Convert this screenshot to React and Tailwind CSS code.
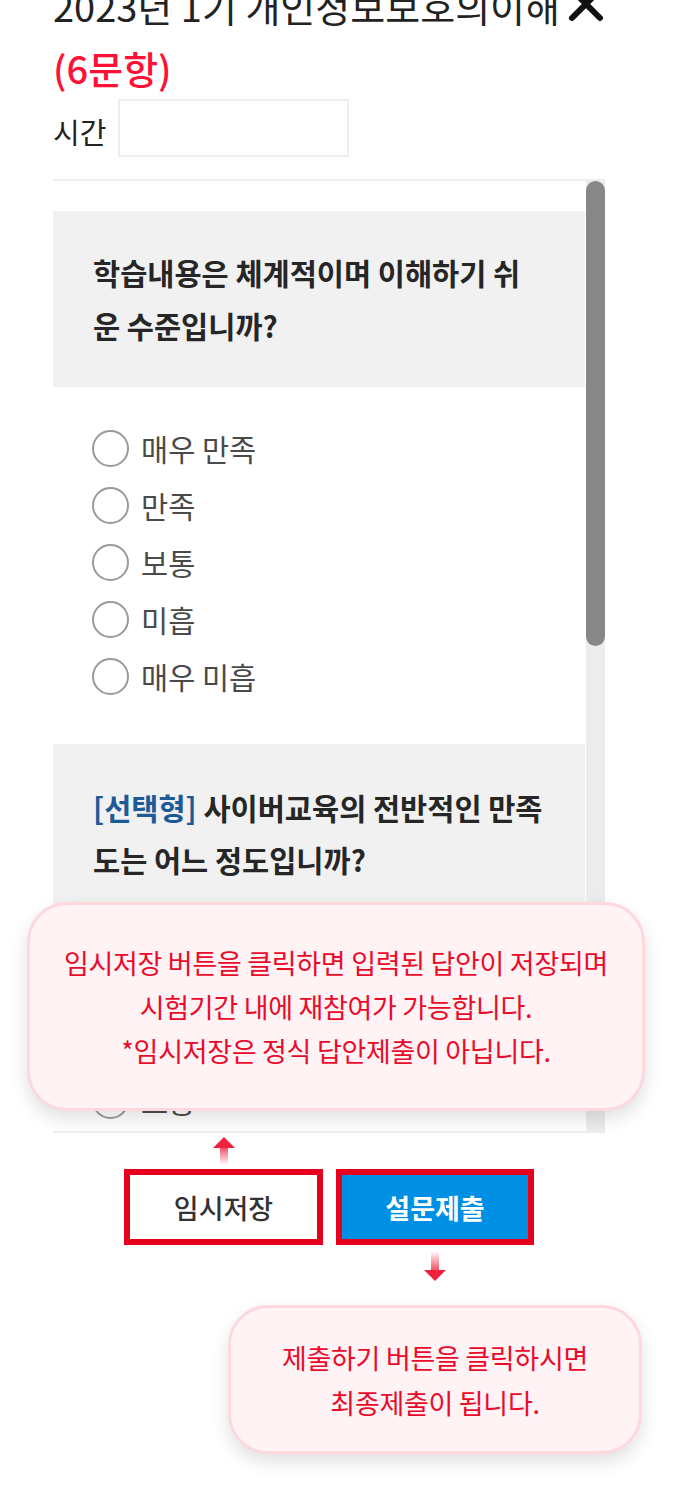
import React from "react";

function Radio({ label }) {
  return (
    <div className="flex items-center h-[57px] gap-[12px]">
      <span className="w-[37px] h-[37px] rounded-full border-[2.5px] border-[#9a9a9a] bg-white shrink-0" />
      <span className="text-[29.5px] text-[#4a4a4a] leading-none whitespace-nowrap">{label}</span>
    </div>
  );
}

const OPTIONS = ["매우 만족", "만족", "보통", "미흡", "매우 미흡"];

function UpArrow() {
  return (
    <svg width="22" height="28" viewBox="0 0 22 28">
      <defs>
        <linearGradient id="ua" x1="0" y1="0" x2="0" y2="1">
          <stop offset="0" stopColor="#f2344d" stopOpacity="0.85" />
          <stop offset="1" stopColor="#f2344d" stopOpacity="0" />
        </linearGradient>
      </defs>
      <polygon points="0,11 11,0 22,11" fill="#f0223e" />
      <rect x="7" y="11" width="8" height="17" fill="url(#ua)" />
    </svg>
  );
}

function DownArrow() {
  return (
    <svg width="22" height="30" viewBox="0 0 22 30">
      <defs>
        <linearGradient id="da" x1="0" y1="1" x2="0" y2="0">
          <stop offset="0" stopColor="#f2344d" stopOpacity="0.85" />
          <stop offset="1" stopColor="#f2344d" stopOpacity="0" />
        </linearGradient>
      </defs>
      <rect x="7" y="0" width="8" height="19" fill="url(#da)" />
      <polygon points="0,19 11,30 22,19" fill="#f0223e" />
    </svg>
  );
}

export default function App() {
  return (
    <div className="w-[680px] h-[1492px] overflow-hidden bg-white pl-[53px] font-['Noto_Sans_CJK_KR','Noto_Sans',sans-serif]">
      <div className="w-[552px]">
        {/* Title */}
        <div className="flex items-center justify-between mt-[-25px] h-[62px]">
          <h1 className="text-[38px] leading-[62px] text-[#222] font-normal whitespace-nowrap">
            2023년 1기 개인정보보호의이해
          </h1>
          <svg width="38" height="38" viewBox="0 0 38 38" className="mt-[-4px] shrink-0">
            <path d="M5 5 L33 33 M33 5 L5 33" stroke="#111" strokeWidth="6" strokeLinecap="round" />
          </svg>
        </div>
        <div className="text-[38px] leading-[62px] text-[#ff1035] font-medium">(6문항)</div>

        {/* Time */}
        <div className="flex items-center gap-[12px] h-[58px]">
          <span className="text-[29px] text-[#222] leading-none mt-[6px]">시간</span>
          <div className="w-[231px] h-[58px] border-2 border-[#eeeeee] bg-white" />
        </div>

        {/* Scroll area */}
        <div className="relative mt-[22px]">
          <div className="flex h-[954px] border-t-2 border-b-2 border-[#eeeeee] overflow-hidden">
            <div className="flex-1 pt-[30px] pr-[1px] min-w-0">
              <div className="bg-[#f1f1f1] pl-[40px] py-[35px] text-[29.5px] leading-[53px] font-semibold text-[#262626] whitespace-nowrap">
                <div>학습내용은 체계적이며 이해하기 쉬</div>
                <div>운 수준입니까?</div>
              </div>
              <div className="pl-[39px] pt-[33px] pb-[39px]">
                {OPTIONS.map((o) => (
                  <Radio key={o} label={o} />
                ))}
              </div>
              <div className="bg-[#f1f1f1] pl-[40px] py-[37px] text-[29.5px] leading-[52px] font-semibold text-[#262626] whitespace-nowrap">
                <div>
                  <span className="text-[#1d5a98]">[선택형]</span> 사이버교육의 전반적인 만족
                </div>
                <div>도는 어느 정도입니까?</div>
              </div>
              <div className="pl-[39px] pt-[36px] pb-[39px]">
                {OPTIONS.map((o) => (
                  <Radio key={"b" + o} label={o} />
                ))}
              </div>
            </div>
            <div className="w-[19px] bg-[#ececec] shrink-0">
              <div className="h-[465px] bg-[#878787] rounded-full" />
            </div>
          </div>

          {/* Bubble 1 */}
          <div className="absolute left-[-26px] top-[723px] w-[618px] h-[209px] rounded-[40px] border-[3px] border-[#ffd8de] bg-[#fff3f5] shadow-[0_8px_18px_rgba(0,0,0,0.12)] flex flex-col items-center justify-center text-[#ea0a2a] text-[27px] leading-[44px] tracking-[-0.3px] whitespace-nowrap">
            <div>임시저장 버튼을 클릭하면 입력된 답안이 저장되며</div>
            <div>시험기간 내에 재참여가 가능합니다.</div>
            <div>*임시저장은 정식 답안제출이 아닙니다.</div>
          </div>
        </div>

        {/* Arrow up */}
        <div className="flex justify-center gap-[13px] mt-[4px] h-[32px]">
          <div className="w-[199px] flex justify-center">
            <UpArrow />
          </div>
          <div className="w-[198px]" />
        </div>

        {/* Buttons */}
        <div className="flex justify-center gap-[13px]">
          <button className="w-[199px] h-[76px] border-[6px] border-[#e6001e] bg-white text-[27px] leading-none text-[#333] font-medium">
            임시저장
          </button>
          <button className="w-[198px] h-[76px] border-[6px] border-[#e6001e] bg-[#0090e3] text-[27px] leading-none text-white font-bold">
            설문제출
          </button>
        </div>

        {/* Arrow down */}
        <div className="flex justify-center gap-[13px] mt-[6px] h-[30px]">
          <div className="w-[199px]" />
          <div className="w-[198px] flex justify-center">
            <DownArrow />
          </div>
        </div>

        {/* Bubble 2 */}
        <div className="ml-[175px] mt-[24px] w-[414px] h-[149px] rounded-[40px] border-[3px] border-[#ffd8de] bg-[#fff3f5] shadow-[0_8px_18px_rgba(0,0,0,0.12)] flex flex-col items-center justify-center text-[#ea0a2a] text-[27px] leading-[45px] tracking-[-0.3px] whitespace-nowrap">
          <div>제출하기 버튼을 클릭하시면</div>
          <div>최종제출이 됩니다.</div>
        </div>
      </div>
    </div>
  );
}
